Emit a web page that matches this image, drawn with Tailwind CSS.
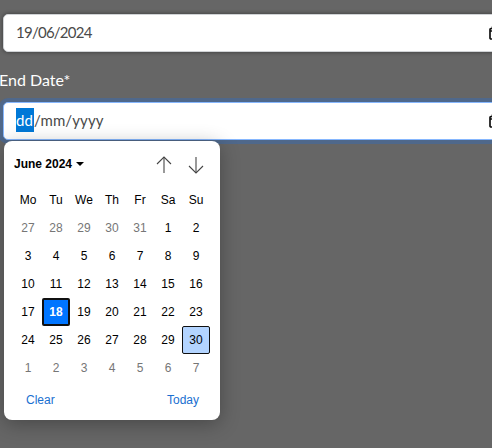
<!DOCTYPE html>
<html>
<head>
  <title>Date range</title>
  <script src="https://cdn.jsdelivr.net/npm/@tailwindcss/browser@4"></script>
</head>
<body class="bg-[#666666] h-[448px] w-[492px] overflow-hidden font-['Lato',sans-serif]">
  <div class="pt-[14px] pl-[3px] w-[560px]">
    <div class="h-[38px] bg-white rounded-[5px] border border-[#d0d3d6] shadow-[0_0_4px_rgba(0,0,0,0.45)] flex items-center pl-[12px]">
      <span class="w-[473px] text-[15px] leading-[24px] mb-[3px] text-[#4a4a4a] tracking-[-0.75px]">19/06/2024</span>
      <svg width="12" height="14" viewBox="0 0 12 14" fill="none" stroke="#111" stroke-width="1.7"><rect x="1" y="2.5" width="10" height="10.5" rx="1"/><path d="M1 5h10M3.5 0.5v3M8.5 0.5v3"/></svg>
    </div>

    <label class="block -ml-[4px] mt-[18px] mb-[12px] h-[20px] leading-[20px] text-[16px] text-white whitespace-nowrap">End Date*</label>

    <div class="h-[38px] bg-white rounded-[5px] border border-[#86b7fe] shadow-[0_0_0_4px_rgba(13,110,253,0.25)] flex items-center pl-[12px]">
      <span class="w-[473px] flex items-center text-[15px] leading-[24px] mb-[3px] text-[#4a4a4a] tracking-[0.1px]"><span class="bg-[#0078d7] text-white h-[24px] w-[18px]">dd</span>/mm/yyyy</span>
      <svg width="12" height="14" viewBox="0 0 12 14" fill="none" stroke="#111" stroke-width="1.7"><rect x="1" y="2.5" width="10" height="10.5" rx="1"/><path d="M1 5h10M3.5 0.5v3M8.5 0.5v3"/></svg>
    </div>
  </div>

  <!-- date picker popup -->
  <div class="absolute left-[4px] top-[141px] w-[216px] h-[279px] bg-white rounded-[8px] shadow-[0_4px_20px_rgba(0,0,0,0.3)] px-[10px] font-['Liberation_Sans',sans-serif] text-[12px] text-black">
    <div class="flex items-center h-[45px]">
      <span class="font-bold">June 2024</span>
      <span class="ml-[4px] mt-[1px] w-0 h-0 border-x-[4px] border-x-transparent border-t-[4px] border-t-black"></span>
      <div class="ml-auto flex gap-[12px] pr-[4px]">
        <svg width="20" height="20" viewBox="0 0 20 20" fill="none"><path d="M10 3v16" stroke="#808080" stroke-width="1.6"/><path d="M3 10l7-7 7 7" stroke="#444" stroke-width="1.1"/></svg>
        <svg width="20" height="20" viewBox="0 0 20 20" fill="none"><path d="M10 3v16" stroke="#808080" stroke-width="1.6"/><path d="M3 12l7 7 7-7" stroke="#444" stroke-width="1.1"/></svg>
      </div>
    </div>
    <div class="grid grid-cols-[repeat(7,28px)] auto-rows-[28px] items-center justify-items-center text-center">
      <span>Mo</span><span>Tu</span><span>We</span><span>Th</span><span>Fr</span><span>Sa</span><span>Su</span>
      <span class="text-[#767676]">27</span><span class="text-[#767676]">28</span><span class="text-[#767676]">29</span><span class="text-[#767676]">30</span><span class="text-[#767676]">31</span><span>1</span><span>2</span>
      <span>3</span><span>4</span><span>5</span><span>6</span><span>7</span><span>8</span><span>9</span>
      <span>10</span><span>11</span><span>12</span><span>13</span><span>14</span><span>15</span><span>16</span>
      <span>17</span>
      <span class="size-[28px] flex items-center justify-center bg-[#0075ff] border-2 border-[#101010] rounded-[2px] text-white font-bold">18</span>
      <span>19</span><span>20</span><span>21</span><span>22</span><span>23</span>
      <span>24</span><span>25</span><span>26</span><span>27</span><span>28</span><span>29</span>
      <span class="size-[28px] flex items-center justify-center bg-[#b3d4ff] border border-[#101010] rounded-[2px]">30</span>
      <span class="text-[#767676]">1</span><span class="text-[#767676]">2</span><span class="text-[#767676]">3</span><span class="text-[#767676]">4</span><span class="text-[#767676]">5</span><span class="text-[#767676]">6</span><span class="text-[#767676]">7</span>
    </div>
    <div class="flex justify-between pl-[12px] pr-[11px] mt-[9px] text-[#1a6fd0]">
      <span>Clear</span><span>Today</span>
    </div>
  </div>
</body>
</html>
